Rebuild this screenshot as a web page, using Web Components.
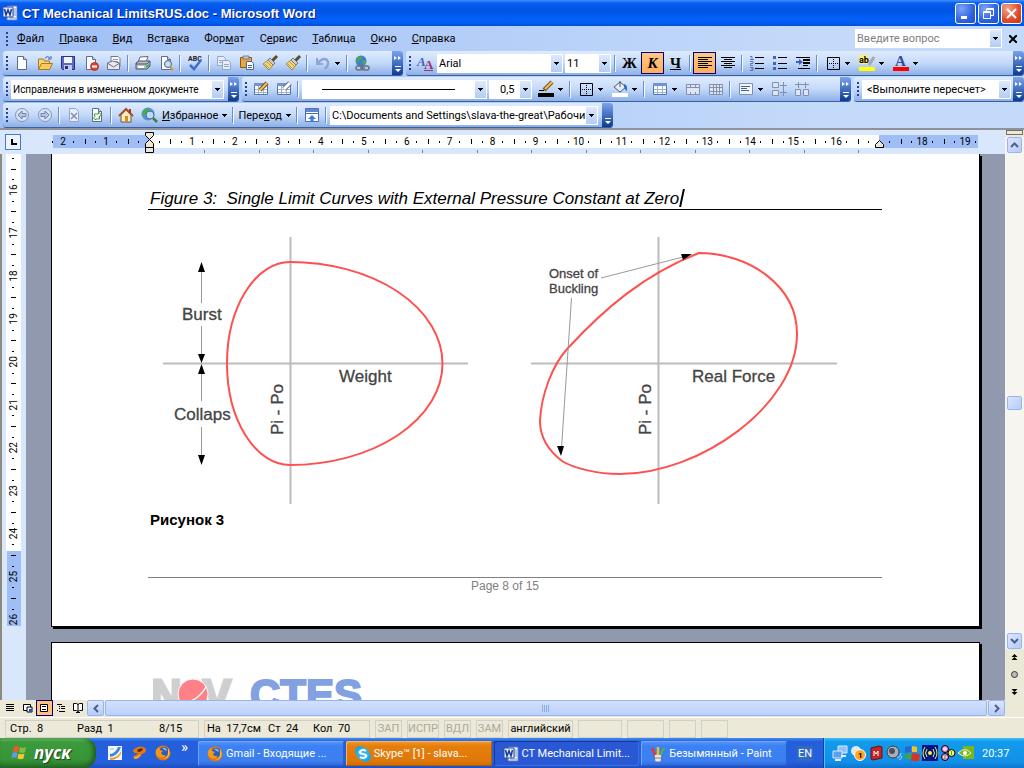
<!DOCTYPE html>
<html lang="ru">
<head>
<meta charset="utf-8">
<title>CT Mechanical LimitsRUS.doc - Microsoft Word</title>
<style>
  html, body { margin: 0; height: 100%; }
  body {
    font-family: Roboto, "Liberation Sans", sans-serif;
    font-size: 11px;
    color: #000;
    overflow: hidden;
  }
  word-window { height: 100%; }
</style>
</head>
<body>
<word-window></word-window>

<script>
const triangle = '<path d="M0 0h5v1h-1v1h-1v1h-1v-1h-1v-1h-1z"/>';
const wordIcon = '<path d="M5 1h10v14H5z" fill="#fff" stroke="#5a78b8"/><path d="M11 4h3M11 6h3M11 8h3M11 10h3M7 13h7" stroke="#6b8bd0"/><path d="M1 2h10v10H1z" fill="#e8effc" stroke="#2b4fa0"/><path d="M2.500 4l1.500 6 2-5 2 5 1.500-6" fill="none" stroke="#1d3f9a" stroke-width="1.600"/>';
const firefox = '<circle cx="8" cy="8" r="7.500" fill="#e8730c"/><circle cx="9" cy="7" r="5" fill="#2c5fb8"/><path d="M7 3q3-1 5 2-1 1-2 0z" fill="#9cc8f4"/><path d="M1 5l3-3 1 3 3 1-2 2q1 3 5 2-2 4-7 2-4-2-3-7z" fill="#f39a1b"/><path d="M13 3q3 5 0 9-2 2-5 2 5-2 5-6z" fill="#ffc53a"/>';
const sheet = '<path d="M3.500 1.500h6l3 3v10h-9z" fill="#fff" stroke="#5a6b94"/><path d="M9.500 1.500v3h3" fill="#cfdcf5" stroke="#5a6b94"/>';
const brush = '<path d="M15 1l-5 5" stroke="#5c4a2c" stroke-width="3"/><path d="M8 3l5 5-2 2-5-5z" fill="#c8ced8" stroke="#5b5f6b" stroke-width=".8"/><path d="M6 5l5 5-4 5-6-6z" fill="#f3d873" stroke="#87743a" stroke-width=".8"/><path d="M3 9l4 4M5 7l4 4" stroke="#b59a3c"/>';
const tableShape = '<path d="M1.500 2.500h13v11h-13z" fill="#fff" stroke="#5373b0"/><path d="M1 2h14v3H1z" fill="#6f93d4"/><path d="M2 8.500h12M2 11.500h12M5.500 5v8M10.500 5v8" stroke="#9db2da"/>';
const grayTable = '<path d="M1.500 3.500h13v10h-13z" fill="#dfe6f3" stroke="#8290ae"/>';
const frame = '<path d="M2.500 2.500h12v12h-12z" fill="none" stroke="#000"/><path d="M8.500 4v10M4 8.500h10" stroke="#000" stroke-dasharray="1 1"/>';

// Every glyph is drawn on a 16 x 16 grid
const ICONS = {
  word: wordIcon,
  firefox,
  newdoc: sheet,
  open: '<path d="M1.500 14V4h5l1 2h5v3" fill="#f7d570" stroke="#a57b22"/><path d="M1.500 14.500l3-6h11l-3 6z" fill="#fbc95c" stroke="#a57b22"/><path d="M8 3q3-3 5 0m1-2v3h-3" fill="none" stroke="#3a67b8"/>',
  save: '<path d="M1.500 1.500h13v13h-12l-1-1z" fill="#5b68c4" stroke="#26327e"/><path d="M4 2h8v6H4z" fill="#f1f4fc"/><path d="M4 10h8v5H4z" fill="#c3c9e0"/><path d="M5 11h3v3H5z" fill="#26327e"/>',
  permission: sheet + '<circle cx="11.500" cy="11.500" r="4" fill="#e2452c" stroke="#9d1d10" stroke-width=".7"/><path d="M9 11.500h5" stroke="#fff" stroke-width="2"/>',
  mail: '<path d="M5 1.500h7l2 2v8H5z" fill="#fff" stroke="#70778c"/><path d="M7 4.500h5M7 6.500h5" stroke="#8d9cc0"/><path d="M1.500 8l5-2 7 2v6.500h-12z" fill="#e8e8ee" stroke="#6d7284"/><path d="M2 8.500l5.500 3.500L13 8.500" fill="none" stroke="#6d7284"/>',
  print: '<path d="M5 2l8-.5-2 6H3z" fill="#fff" stroke="#667"/><path d="M1 8l3-2h11v5l-3 3H1z" fill="#b9bfcc" stroke="#4b5266"/><path d="M1 9h11l3-3" fill="none" stroke="#4b5266"/><path d="M3 11h6v2H3z" fill="#fff"/><path d="M11 12l3-2" stroke="#3fae3c" stroke-width="2"/>',
  preview: sheet + '<circle cx="10" cy="9" r="3.500" fill="#bfe0f7" stroke="#555d70"/><path d="M12 12l3 3" stroke="#d6963b" stroke-width="2"/>',
  spell: '<text x="1" y="6" font-size="7" font-weight="bold" fill="#222">ABC</text><path d="M3 10l4 4 7-9" fill="none" stroke="#3a6fd0" stroke-width="2.500"/>',
  copy: '<g fill="#e8edf8" stroke="#93a4c8"><path d="M1.500 1.500h6l2 2v7h-8z"/><path d="M6.500 5.500h6l2 2v7h-8z"/></g><path d="M8 9.500h5M8 11.500h5M3 5.500h3M3 7.500h3" stroke="#93a4c8"/>',
  paste: '<path d="M1.500 2.500h11v10h-11z" fill="#e9a93a" stroke="#8c5c15"/><path d="M4 1h6v3H4z" fill="#c5c8d1" stroke="#5c5f6c" stroke-width=".7"/><path d="M7.500 6.500h5l2 2v6h-7z" fill="#fff" stroke="#4963a0"/><path d="M9 10.500h4M9 12.500h4" stroke="#4963a0"/>',
  brush,
  undo: '<path d="M2 3v6h6" fill="none" stroke="#8fa5d3" stroke-width="2"/><path d="M3 8q5-6 9-3 3 4-2 9" fill="none" stroke="#8fa5d3" stroke-width="2.500"/>',
  link: '<circle cx="7" cy="6" r="5.500" fill="#3d7fd0"/><path d="M3 3q3-3 5-1 0 3-3 3-1 4-3 2zM8 6l4-1q0 4-3 5z" fill="#4cab45"/><g fill="none" stroke="#6b7180" stroke-width="1.500"><rect x="2" y="11" width="6" height="4" rx="2"/><rect x="8" y="11" width="7" height="4" rx="2"/><path d="M6 13h5"/></g>',
  styles: '<text x="0" y="11" font-family="Liberation Serif" font-style="italic" font-weight="bold" font-size="13" fill="#3d62bc">A</text><text x="7" y="14" font-family="Liberation Serif" font-weight="bold" font-size="13" fill="#a02f7c">A</text><path d="M7 15.500h9" stroke="#a02f7c"/>',
  left: '<path d="M1 2.500h14M1 4.500h10M1 6.500h14M1 8.500h10M1 10.500h14M1 12.500h10" stroke="#000"/>',
  center: '<path d="M1 2.500h14M4 4.500h8M1 6.500h14M4 8.500h8M1 10.500h14M4 12.500h8" stroke="#000"/>',
  numbers: '<path d="M6 2.500h9M6 8.500h9M6 13.500h9" stroke="#000"/><path d="M1 1.500h2v3M1 4.500h4M1 6.500h3v2H1.500v2H4M1 12.500h3v3H1M2 14h2" fill="none" stroke="#5a79ba"/>',
  bullets: '<path d="M6 2.500h9M6 8.500h9M6 13.500h9" stroke="#000"/><path d="M1 1h3v3H1zM1 7h3v3H1zM1 12h3v3H1z" fill="#4166b5"/>',
  indent: '<path d="M1 2.500h14M8 10.500h5M3 13.500h12" stroke="#000"/><path d="M8 5h7M8 8h7" stroke="#000" stroke-width="2"/><path d="M1 7h4" stroke="#2f62c4" stroke-width="2"/><path d="M4 4l4 3-4 3z" fill="#2f62c4"/>',
  frame,
  marker: '<path d="M0 0h9v9H0z" fill="#fbf36e"/><text x="0" y="8" font-size="9" font-weight="bold">ab</text><path d="M15 2l-5 8" stroke="#a7a7ae" stroke-width="3"/><path d="M0 12h16v4H0z" fill="#ff0"/>',
  color: '<text x="2" y="11" font-family="Liberation Serif" font-weight="bold" font-size="15" fill="#2f4f9c">A</text><path d="M0 12h16v4H0z" fill="#f00"/>',
  draw: tableShape + '<path d="M14 2L7 9" stroke="#7c5219" stroke-width="4"/><path d="M14 2L7 9" stroke="#f3c15c" stroke-width="2"/>',
  erase: tableShape + '<path d="M14 2L8 8" stroke="#68718a" stroke-width="5"/><path d="M14 2L8 8" stroke="#fff" stroke-width="3"/>',
  pen: '<path d="M14 1L6 9" stroke="#7c5219" stroke-width="4"/><path d="M14 1L7 8" stroke="#f3c15c" stroke-width="2"/><path d="M1 9.500h5" stroke="#000"/><path d="M0 12h16v4H0z"/>',
  bucket: '<path d="M2 6l6-5 6 5-6 5z" fill="#e6ebf5" stroke="#4c5874"/><path d="M8 6V0" stroke="#4c5874"/><path d="M12 3q4 1 3 7-2-1-3-4z" fill="#386bc8"/><path d="M0 12h16v4H0z" fill="#fff"/>',
  table: tableShape,
  merge: grayTable + '<path d="M2 6.500h12M5.500 3v3M10.500 3v3M5.500 11v3M10.500 11v3" stroke="#8290ae"/>',
  split: grayTable + '<path d="M2 6.500h12M2 10.500h12M5.500 4v9M8.500 4v9M11.500 4v9" stroke="#8290ae"/>',
  cellalign: '<path d="M1.500 2.500h13v11h-13z" fill="#eff3fa" stroke="#8290ae"/><path d="M3 5.500h9M3 7.500h6M3 9.500h8" stroke="#49618f"/>',
  rows: '<path d="M1.500 1.500h6v5h-6zM1.500 9.500h6v5h-6z" fill="#dfe6f3" stroke="#8290ae"/><path d="M12.500 1v14M9 4.500h7M9 11.500h7" stroke="#8290ae"/>',
  cols: '<path d="M1.500 8.500h5v6h-5zM9.500 8.500h5v6h-5z" fill="#dfe6f3" stroke="#8290ae"/><path d="M1 3.500h14M4.500 1v6M11.500 1v6" stroke="#8290ae"/>',
  back: '<circle cx="8" cy="8" r="6.500" fill="#d5e0f2" stroke="#8496ba"/><path d="M8 4L4 8l4 4v-2.500h4v-3H8z" fill="#b5c6e6" stroke="#6c81ac"/>',
  forward: '<circle cx="8" cy="8" r="6.500" fill="#d5e0f2" stroke="#8496ba"/><path d="M8 4l4 4-4 4v-2.500H4v-3h4z" fill="#b5c6e6" stroke="#6c81ac"/>',
  stop: '<path d="M3.500 1.500h6l3 3v10h-9z" fill="#e9eef8" stroke="#93a4c8"/><path d="M5 6l6 6M11 6l-6 6" stroke="#8090b2" stroke-width="1.500"/>',
  refresh: sheet + '<path d="M5.500 9V7h4V5l3 3-3 2M10.500 9v3h-4v1l-2-2 2-2" fill="none" stroke="#3b9a34"/>',
  home: '<path d="M3 8v7h10V8L8 3z" fill="#f7ebc4" stroke="#6b5a35"/><path d="M1 9l7-7 7 7" fill="none" stroke="#a6522b" stroke-width="2"/><path d="M11 2h2v4h-2z" fill="#9b3c24"/><path d="M7 9h3v6H7z" fill="#d98b1f"/>',
  search: '<circle cx="7" cy="7" r="6.500" fill="#4e95de"/><path d="M2 4q4-4 6-2 0 4-3 4-1 4-4 2z" fill="#4cab45"/><circle cx="9" cy="8" r="4" fill="#d6ecfa" fill-opacity=".8" stroke="#4d6b94"/><path d="M12 11l4 4" stroke="#3f7c45" stroke-width="2.500"/>',
  webbar: '<path d="M1.500 1.500h13v13h-13z" fill="#fff" stroke="#4a6fb8"/><path d="M2 2h12v3H2z" fill="#5d86d4"/><path d="M2 6.500h12" stroke="#4a6fb8"/><path d="M8 8l4 4H9.500v3h-3v-3H4z" fill="#3c7bd9"/>',
  normalview: '<path d="M4 4.500h8M4 6.500h8M4 8.500h8M4 10.500h8" stroke="#000"/>',
  webview: '<path d="M4.500 4.500h7v6h-7z" fill="#fff" stroke="#000"/><path d="M8 7h5v5H8z" fill="#fff" stroke="#000"/><path d="M10 9h3v3h-3z" fill="#2454c8"/>',
  printview: '<path d="M4.500 4.500h7v7h-7z" fill="#fff" stroke="#000"/><path d="M6 6.500h4M6 9.500h4" stroke="#000"/>',
  outline: '<path d="M4 4.500h5M6 6.500h1M8 6.500h4M6 8.500h1M8 8.500h4M4 10.500h1M6 11.500h6" stroke="#000"/>',
  reading: '<path d="M3.500 3.500h3l1.500 1 1.500-1h3v7h-3l-1.500 1-1.500-1h-3zM8 4v8M6 12.500h4" fill="#fff" stroke="#000"/>',
  flag: '<path d="M3 3q3-2 5-.5L7 8Q4 7 2 8z" fill="#f0592a"/><path d="M9 3q3 2 6 0l-1 5q-3 2-6 0z" fill="#7ac143"/><path d="M1.500 9q3-1.500 5 0l-1 5q-3-1.500-5 0z" fill="#5b9cf2"/><path d="M7.500 9.500q3 1.500 6 0l-1 5q-3 1.500-6 0z" fill="#fbc52d"/>',
  desktop: '<path d="M1 1h14v14H1z" fill="#f2f8ff"/><path d="M3 9q5 0 8-7h3q-3 9-11 10z" fill="#3a89dc"/><path d="M3 13q8 0 11-7v3q-4 6-11 6z" fill="#f39b22"/><path d="M3 4h4" stroke="#9db8da"/>',
  clasp: '<path d="M2 5q7-6 12-2 3 4-3 6-2 5-7 5-4-3 1-4l3-2q-6 1-6-3z" fill="#e8790f"/><path d="M6 5q4-3 6-1-1 3-5 3z" fill="#612a0a"/><path d="M3 13q3 1 6-3" fill="none" stroke="#ffd06a"/>',
  skype: '<circle cx="5" cy="5" r="5" fill="#1ba4e8"/><circle cx="11" cy="11" r="5" fill="#1ba4e8"/><circle cx="8" cy="8" r="6.500" fill="#2cb3f1"/><path d="M11 5Q8 3 5.500 5T8 8t2.500 3T5 11" fill="none" stroke="#fff" stroke-width="2"/>',
  paint: '<path d="M4 8h8l-1 8H5z" fill="#dfe8f5" stroke="#5772a8"/><path d="M5 9L2 2" stroke="#e23b2e" stroke-width="2.500"/><path d="M8 9V1" stroke="#f2b92b" stroke-width="2.500"/><path d="M10 9l4-7" stroke="#51b04a" stroke-width="2.500"/><path d="M5 12h6" stroke="#c66"/>',
  network: '<path d="M6 1h9v7H6z" fill="#8fc1f7" stroke="#dce9fb"/><path d="M1 6h9v7H1z" fill="#5a9ff0" stroke="#dce9fb"/><path d="M3 15h6M9 11h5" stroke="#e4ecf8" stroke-width="2"/>',
  badge: '<circle cx="6" cy="6" r="5" fill="#dfe8f0"/><circle cx="10" cy="10" r="5.500" fill="#ffa51f" stroke="#fff"/><text x="8" y="13" font-size="8" font-weight="bold">1</text>',
  mbook: '<path d="M3 3l8-2 3 1v11l-9 2-2-1z" fill="#c22427" stroke="#6e0d10"/><path d="M6 11V6l2 3 2-3v5" fill="none" stroke="#fff"/>',
  speaker: '<circle cx="7" cy="7" r="6" fill="#a9aeb8" stroke="#3d424c"/><circle cx="6" cy="6" r="3" fill="#4b505b"/><path d="M11 13q4-1 4-5M13 15q3-1 3-4" fill="none" stroke="#b7d4ff"/>',
  blocks: '<path d="M1 2l6-1v6l-6 1z" fill="#2c62d2"/><path d="M8 1l5 1v5H8z" fill="#f3c321"/><path d="M1 9l6-1v6H1z" fill="#3aa640"/><path d="M8 8l8 1-1 7H7z" fill="#d83126"/>',
  antenna: '<path d="M0 0h16v16H0z" fill="#001489"/><circle cx="8" cy="8" r="2" fill="#ffef3b"/><path d="M5 4q-3 4 0 8M11 4q3 4 0 8M3 2q-4 6 0 12M13 2q4 6 0 12" fill="none" stroke="#ffef3b"/>',
  balls: '<g stroke="#000"><circle cx="5" cy="4" r="3.500" fill="#fb8ae0"/><circle cx="11.500" cy="8" r="3.500" fill="#f3f05f"/><circle cx="5" cy="12" r="3.500" fill="#fb8ae0"/></g><path d="M3 4h4M5 2v4M10 8h3M3 12h4" stroke="#fff"/><path d="M5 10v4M11.500 6v4" stroke="#36ad3a"/>',
  nvidia: '<path d="M5 1h11v13H5z" fill="#7bb71b"/><path d="M0 8q7-7 13 0-6 6-13 0z" fill="#7bb71b" stroke="#e8f5cf"/><circle cx="7" cy="8" r="2" fill="#fff"/>'
};

class WordIcon extends HTMLElement {
  connectedCallback() {
    this.attachShadow({ mode: 'open' });
    this.shadowRoot.innerHTML = `
      <style>
        :host { display: block; width: 16px; height: 16px; flex: none; }
        svg { display: block; width: 100%; height: 100%; overflow: visible; }
      </style>
      <svg viewBox="0 0 16 16" aria-hidden="true">${ICONS[this.getAttribute('name')] || ''}</svg>
    `;
  }
}
customElements.define('word-icon', WordIcon);

class ToolButton extends HTMLElement {
  connectedCallback() {
    const icon = this.getAttribute('icon');
    this.attachShadow({ mode: 'open' });
    this.shadowRoot.innerHTML = `
      <style>
        :host { display: block; flex: none; }
        button {
          display: flex;
          align-items: center;
          justify-content: center;
          gap: 4px;
          width: 23px;
          height: 22px;
          padding: 0;
          border: 1px solid transparent;
          background: none;
          font: inherit;
          color: inherit;
        }
        :host([menu]) button { width: 34px; }
        :host([text]) button { width: auto; padding: 0 2px 0 1px; }
        :host([active]) button { border-color: #000080; background: linear-gradient(#ffc884, #ffae5a); }
        :host([glyph]) button { font: bold 15px "Liberation Serif", serif; }
        .caret { width: 5px; height: 3px; flex: none; }
      </style>
      <button aria-label="${this.getAttribute('label') || icon || ''}">
        ${icon ? `<word-icon name="${icon}"></word-icon>` : ''}<span><slot></slot></span>
        ${this.hasAttribute('menu') ? `<svg class="caret" viewBox="0 0 5 3">${triangle}</svg>` : ''}
      </button>
    `;
    if (!this.textContent) this.shadowRoot.querySelector('span').remove();
    if (this.hasAttribute('text') || this.hasAttribute('glyph')) {
      this.shadowRoot.querySelector('button').removeAttribute('aria-label');
    }
  }
}
customElements.define('tool-button', ToolButton);

class ToolSep extends HTMLElement {
  connectedCallback() {
    this.attachShadow({ mode: 'open' });
    this.shadowRoot.innerHTML = `
      <style>
        :host { display: block; flex: none; width: 1px; height: 16px; margin: 0 3px 0 2px; background: #6a8ccb; box-shadow: 1px 1px #f1f9ff; }
      </style>
    `;
  }
}
customElements.define('tool-sep', ToolSep);

class ToolCombo extends HTMLElement {
  connectedCallback() {
    const value = this.getAttribute('value');
    this.attachShadow({ mode: 'open' });
    this.shadowRoot.innerHTML = `
      <style>
        :host { display: grid; flex: none; height: 19px; margin: 0 1px; background: #fff; }
        select, input {
          grid-area: 1 / 1;
          box-sizing: border-box;
          width: 100%;
          min-width: 0;
          height: 19px;
          padding: 0 12px 0 var(--indent, 1px);
          border: 1px solid #fff;
          appearance: none;
          background: none;
          font: inherit;
          color: inherit;
          outline: none;
        }
        input::placeholder { color: #808080; opacity: 1; }
        .drop {
          grid-area: 1 / 1;
          justify-self: end;
          display: grid;
          place-items: center;
          width: 11px;
          height: 17px;
          margin: 1px;
          background: linear-gradient(#dde9fd, #b3cdf3);
          pointer-events: none;
        }
        .drop svg { width: 5px; height: 3px; }
        .stroke { grid-area: 1 / 1; align-self: center; height: 1px; margin: 0 32px 0 20px; background: #000; }
      </style>
      ${this.hasAttribute('placeholder')
        ? `<input placeholder="${this.getAttribute('placeholder')}" aria-label="Вопрос">`
        : `<select aria-label="${this.getAttribute('label') || ''}"><option>${value || ''}</option></select>`}
      ${this.hasAttribute('stroke') ? '<span class="stroke"></span>' : ''}
      <span class="drop"><svg viewBox="0 0 5 3">${triangle}</svg></span>
    `;
  }
}
customElements.define('tool-combo', ToolCombo);

class ToolBar extends HTMLElement {
  connectedCallback() {
    this.attachShadow({ mode: 'open' });
    this.shadowRoot.innerHTML = `
      <style>
        :host {
          display: flex;
          flex: none;
          align-items: center;
          box-sizing: border-box;
          height: 25px;
          padding-left: 3px;
          border-bottom: 1px solid #3b619c;
          border-radius: 3px;
          background: linear-gradient(#dfebfe, #c4daf9 50%, #8db0e8);
        }
        :host([fill]) { flex: 1; min-width: 0; }
        .grip {
          width: 2px;
          height: 14px;
          flex: none;
          margin-right: 2px;
          background: repeating-linear-gradient(#27418a 0 2px, transparent 2px 4px);
        }
        .more {
          align-self: stretch;
          display: flex;
          flex-direction: column;
          align-items: center;
          justify-content: space-between;
          box-sizing: border-box;
          width: 11px;
          height: 24px;
          margin: 0 0 0 auto;
          padding: 5px 0 3px;
          border: 0;
          border-radius: 0 3px 3px 0;
          background: linear-gradient(#7aa3ee, #4470c0 50%, #0b3a92);
        }
        .more svg { width: 8px; height: 6px; }
        .tail { flex: none; width: var(--tail, 3px); }
      </style>
      <span class="grip"></span>
      <slot></slot>
      <span class="tail"></span>
      <button class="more" aria-label="Параметры панелей">
        <svg viewBox="0 0 8 6">${this.hasAttribute('more') ? '<path d="M0 0l3 2-3 2zM4 0l3 2-3 2z" fill="#fff"/>' : ''}</svg>
        <svg viewBox="0 0 8 6"><path d="M1 0h6v1H1zM1 3h6L4 6z" fill="#fff"/></svg>
      </button>
    `;
  }
}
customElements.define('tool-bar', ToolBar);

class TitleBar extends HTMLElement {
  connectedCallback() {
    this.attachShadow({ mode: 'open' });
    this.shadowRoot.innerHTML = `
      <style>
        :host {
          display: flex;
          flex: none;
          align-items: center;
          gap: 2px;
          box-sizing: border-box;
          height: 26px;
          padding: 0 2px;
          background: linear-gradient(#3a94ff, #0a5cf0 12%, #0054e3 40%, #0062fb 80%, #0050d8);
          color: #fff;
        }
        h1 { flex: 1; margin: 0 0 0 2px; font: bold 13px "Liberation Sans", sans-serif; text-shadow: 1px 1px #0a1883; white-space: nowrap; }
        button {
          display: grid;
          place-items: center;
          box-sizing: border-box;
          width: 21px;
          height: 21px;
          padding: 0;
          border: 1px solid #fff;
          border-radius: 3px;
          background: radial-gradient(circle at 30% 25%, #7ba4f5, #2e62e0 60%, #1f4fd0);
        }
        .close { background: radial-gradient(circle at 30% 25%, #f0a68d, #e0492a 60%, #c53510); }
        svg { width: 13px; height: 13px; fill: none; stroke: #fff; }
      </style>
      <word-icon name="word"></word-icon>
      <h1><slot></slot></h1>
      <button aria-label="Свернуть"><svg viewBox="0 0 13 13"><path d="M2 10.500h6" stroke-width="3"/></svg></button>
      <button aria-label="Свернуть в окно"><svg viewBox="0 0 13 13"><path d="M4.500 4V1.500h7v7H9M4 2.500h8M1.500 4.500h7v7h-7zM1 5.500h8"/></svg></button>
      <button class="close" aria-label="Закрыть"><svg viewBox="0 0 13 13"><path d="M2 2l9 9M11 2l-9 9" stroke-width="2"/></svg></button>
    `;
  }
}
customElements.define('title-bar', TitleBar);

class MenuBar extends HTMLElement {
  connectedCallback() {
    const items = ['<u>Ф</u>айл', '<u>П</u>равка', '<u>В</u>ид', 'Вст<u>а</u>вка', 'Фор<u>м</u>ат', 'С<u>е</u>рвис', '<u>Т</u>аблица', '<u>О</u>кно', '<u>С</u>правка'];
    this.attachShadow({ mode: 'open' });
    this.shadowRoot.innerHTML = `
      <style>
        :host { display: flex; align-items: center; height: 25px; padding: 0 6px; }
        .grip { width: 2px; height: 14px; margin-right: 2px; background: repeating-linear-gradient(#27418a 0 2px, transparent 2px 4px); }
        nav { display: flex; flex: 1; gap: 1px; }
        button { padding: 2px 7px; border: 0; background: none; font: inherit; color: inherit; }
        tool-combo { width: 147px; }
        .x { padding: 0 1px 0 6px; height: 16px; }
        .x svg { display: block; width: 8px; height: 8px; }
      </style>
      <span class="grip"></span>
      <nav>${items.map(item => `<button>${item}</button>`).join('')}</nav>
      <tool-combo placeholder="Введите вопрос"></tool-combo>
      <button class="x" aria-label="Закрыть документ"><svg viewBox="0 0 8 8"><path d="M0 0l8 8M8 0L0 8" stroke="#000" stroke-width="2"/></svg></button>
    `;
  }
}
customElements.define('menu-bar', MenuBar);

class CommandBars extends HTMLElement {
  connectedCallback() {
    this.attachShadow({ mode: 'open' });
    this.shadowRoot.innerHTML = `
      <style>
        :host { display: grid; gap: 1px; flex: none; }
        .row { display: flex; gap: 3px; padding-left: 3px; }
        .review { width: 213px; font-size: 10px; }
        .font { width: 126px; }
        .size { width: 46px; }
        .line { width: 185px; }
        .weight { width: 43px; --indent: 10px; }
        .calc { flex: 1; min-width: 0; --indent: 4px; }
        .address { width: 268px; }
      </style>
      <div class="row">
        <tool-bar more style="--tail: 19px">
          <tool-button icon="newdoc"></tool-button><tool-button icon="open"></tool-button><tool-button icon="save"></tool-button><tool-button icon="permission"></tool-button><tool-button icon="mail"></tool-button>
          <tool-sep></tool-sep>
          <tool-button icon="print"></tool-button><tool-button icon="preview"></tool-button>
          <tool-sep></tool-sep>
          <tool-button icon="spell"></tool-button>
          <tool-sep></tool-sep>
          <tool-button icon="copy"></tool-button><tool-button icon="paste"></tool-button><tool-button icon="brush"></tool-button><tool-button icon="brush"></tool-button>
          <tool-sep></tool-sep>
          <tool-button icon="undo" menu></tool-button>
          <tool-sep></tool-sep>
          <tool-button icon="link"></tool-button>
        </tool-bar>
        <tool-bar more fill>
          <tool-button icon="styles"></tool-button>
          <tool-combo class="font" value="Arial" label="Шрифт"></tool-combo>
          <tool-combo class="size" value="11" label="Размер"></tool-combo>
          <tool-sep></tool-sep>
          <tool-button glyph>Ж</tool-button><tool-button glyph active><i>К</i></tool-button><tool-button glyph><u>Ч</u></tool-button>
          <tool-sep></tool-sep>
          <tool-button icon="left" active></tool-button><tool-button icon="center"></tool-button>
          <tool-sep></tool-sep>
          <tool-button icon="numbers"></tool-button><tool-button icon="bullets"></tool-button><tool-button icon="indent"></tool-button>
          <tool-sep></tool-sep>
          <tool-button icon="frame" menu></tool-button><tool-button icon="marker" menu></tool-button><tool-button icon="color" menu></tool-button>
        </tool-bar>
      </div>
      <div class="row">
        <tool-bar more>
          <tool-combo class="review" value="Исправления в измененном документе" label="Просмотр"></tool-combo>
        </tool-bar>
        <tool-bar more style="--tail: 27px">
          <tool-button icon="draw"></tool-button><tool-button icon="erase"></tool-button>
          <tool-sep></tool-sep>
          <tool-combo class="line" stroke label="Тип линии"></tool-combo>
          <tool-combo class="weight" value="0,5" label="Толщина"></tool-combo>
          <tool-button icon="pen" menu></tool-button>
          <tool-sep></tool-sep>
          <tool-button icon="frame" menu></tool-button><tool-button icon="bucket" menu></tool-button>
          <tool-sep></tool-sep>
          <tool-button icon="table" menu></tool-button><tool-button icon="merge"></tool-button><tool-button icon="split"></tool-button>
          <tool-sep></tool-sep>
          <tool-button icon="cellalign" menu></tool-button><tool-button icon="rows"></tool-button><tool-button icon="cols"></tool-button>
        </tool-bar>
        <tool-bar more fill style="--tail: 1px">
          <tool-combo class="calc" value="&lt;Выполните пересчет&gt;" label="Пересчет"></tool-combo>
        </tool-bar>
      </div>
      <div class="row">
        <tool-bar>
          <tool-button icon="back"></tool-button><tool-button icon="forward"></tool-button>
          <tool-sep></tool-sep>
          <tool-button icon="stop"></tool-button><tool-button icon="refresh"></tool-button>
          <tool-sep></tool-sep>
          <tool-button icon="home"></tool-button><tool-button icon="search"></tool-button>
          <tool-button text menu><u>И</u>збранное</tool-button>
          <tool-sep></tool-sep>
          <tool-button text menu>Пере<u>х</u>од</tool-button>
          <tool-sep></tool-sep>
          <tool-button icon="webbar"></tool-button>
          <tool-sep></tool-sep>
          <tool-combo class="address" value="C:\\Documents and Settings\\slava-the-great\\Рабочи" label="Адрес"></tool-combo>
        </tool-bar>
      </div>
    `;
  }
}
customElements.define('command-bars', CommandBars);

// Length of one centimetre on both rulers
const CM = 42.95;

class PageRuler extends HTMLElement {
  connectedCallback() {
    const mark = (x, y, h) => `<rect x="${Math.round(x)}" y="${y}" width="1" height="${h}"/>`;
    let marks = '';
    for (let n = -2; n < 20; n++) {
      const x = 136 + n * CM;
      if (n !== 0 && n !== 17) marks += `<text x="${x}" y="10">${Math.abs(n)}</text>`;
      marks += mark(x - CM / 4, 6, 2);
      if (n < 19) marks += mark(x + CM / 2, 4, 5);
      marks += mark(x + CM / 4 - 1, 6, 2);
    }
    let tabs = '';
    for (let i = 0; i < 13; i++) tabs += mark(191 + i * 54.5, 15, 3);
    this.attachShadow({ mode: 'open' });
    this.shadowRoot.innerHTML = `
      <style>
        :host { display: flex; flex: none; height: 24px; padding-left: 5px; background: #d8e7fc; }
        .tab { flex: none; width: 16px; height: 16px; box-sizing: border-box; margin: 4px 0 0; padding: 0; border: 1px solid #4a78cf; background: #eef4ff; }
        .tab svg { display: block; width: 14px; height: 14px; }
        .scale { display: block; flex: none; width: 984px; height: 24px; margin-left: -8px; }
        text { font-size: 10px; text-anchor: middle; }
      </style>
      <button class="tab" aria-label="Табуляция"><svg viewBox="0 0 14 14"><path d="M6 4v5h5" fill="none" stroke="#000" stroke-width="2"/></svg></button>
      <svg class="scale" viewBox="0 -5 984 24">
        <path d="M40 0h96v13H40zM866 0h99v13h-99z" fill="#9ebef5"/>
        <path d="M136 0h730v13H136z" fill="#fff"/>
        ${marks}
        <g fill="#808080">${tabs}</g>
        <path d="M132.500-2.500h8v3l-4 4-4-4zM132.500 12.500v-4l4-4 4 4v4zM132.500 12.500h8v5h-8zM862.500 12.500v-3l4-4 4 4v3z" fill="#ece9d8" stroke="#000"/>
      </svg>
    `;
  }
}
customElements.define('page-ruler', PageRuler);

class SideRuler extends HTMLElement {
  connectedCallback() {
    const mark = (x, y, w) => `<rect x="${x}" y="${Math.round(y)}" width="${w}" height="1"/>`;
    let marks = '';
    for (let n = 15; n <= 26; n++) {
      const y = 36 + (n - 16) * CM;
      if (n > 15) marks += `<text transform="translate(15 ${y}) rotate(-90)">${n}</text>` + mark(10, y - CM / 4, 2);
      if (n < 26) marks += mark(9, y + CM / 2, 5) + mark(10, y + CM / 4, 2);
    }
    this.attachShadow({ mode: 'open' });
    this.shadowRoot.innerHTML = `
      <style>
        :host { display: block; flex: none; width: 24px; overflow: hidden; border-left: 2px solid #8d8a7c; background: #d8e7fc; }
        svg { display: block; width: 24px; height: 546px; }
        text { font-size: 10px; text-anchor: middle; }
      </style>
      <svg viewBox="0 0 24 546">
        <path d="M4 0h15v397H4z" fill="#fff"/>
        <path d="M5 397h14v75H5z" fill="#9ebef5"/>
        ${marks}
      </svg>
    `;
  }
}
customElements.define('side-ruler', SideRuler);

class LimitFigure extends HTMLElement {
  connectedCallback() {
    this.attachShadow({ mode: 'open' });
    this.shadowRoot.innerHTML = `
      <style>
        :host { display: block; }
        svg { display: block; width: 692px; max-width: 100%; font: 17px "Liberation Sans", sans-serif; }
        text { fill: #444; stroke: #444; stroke-width: .3; }
        .small { font-size: 13px; }
        .axis { stroke: #bcbcbc; stroke-width: 2; }
        .lead { stroke: #999; stroke-width: 1; }
        .curve { fill: none; stroke: #ff5050; stroke-width: 2; }
      </style>
      <svg viewBox="148 219 692 292" role="img" aria-label="Single limit curves">
        <path class="axis" d="M290.500 237v267M163 363.500h305M658.500 237v267M531 363.500h306"/>
        <path class="curve" d="M290 262A152.500 101.500 0 0 1 290 465A63 101.500 0 0 1 290 262z"/>
        <path class="curve" d="M699 253C748 253 797 285 797 334C797 405 700 474 620 474C597 474 573 468 562 461C549 451 540 437 540 421C541 396 552 365 568 348C605 308 645 274 699 253z"/>
        <path class="lead" d="M201.500 270v33M201.500 326v30M201.500 372v29M201.500 427v30M601 278l82-21M571.500 298l-10 150"/>
        <path d="M201.500 262l3.500 10h-7zM201.500 363l3.500-9h-7zM201.500 364l3.500 10h-7zM201.500 465l3.500-10h-7zM692 254l-9 6-2-6zM561 456l3-10h-7z"/>
        <text x="182" y="320">Burst</text>
        <text x="174" y="420">Collaps</text>
        <text x="339" y="382">Weight</text>
        <text x="692" y="382">Real Force</text>
        <text transform="translate(283 435) rotate(-90)">Pi - Po</text>
        <text transform="translate(651 435) rotate(-90)">Pi - Po</text>
        <text class="small" x="549" y="278">Onset of</text>
        <text class="small" x="549" y="293">Buckling</text>
      </svg>
    `;
  }
}
customElements.define('limit-figure', LimitFigure);

class DocPage extends HTMLElement {
  connectedCallback() {
    this.attachShadow({ mode: 'open' });
    this.shadowRoot.innerHTML = `
      <style>
        :host {
          display: block;
          box-sizing: border-box;
          padding: 0 97px 0 96px;
          border: 1px solid #000;
          background: #fff;
          box-shadow: 2px 2px #000;
        }
      </style>
      <slot></slot>
    `;
  }
}
customElements.define('doc-page', DocPage);

class ScrollRail extends HTMLElement {
  connectedCallback() {
    this.attachShadow({ mode: 'open' });
    this.shadowRoot.innerHTML = `
      <style>
        :host { display: flex; flex-direction: column; align-items: center; flex: none; width: 19px; background: #ece9d8; }
        .splitter { box-sizing: border-box; width: 17px; height: 5px; margin-bottom: 2px; border: 1px solid #716f64; background: #ece9d8; }
        .rail { display: flex; flex-direction: column; align-items: center; flex: 1; width: 100%; background: #f6f5f0; }
        .top { flex: 244; }
        .bottom { flex: 223; }
        button {
          display: grid;
          place-items: center;
          box-sizing: border-box;
          width: 15px;
          height: 16px;
          flex: none;
          padding: 0;
          border: 1px solid #98b4ee;
          border-radius: 2px;
          background: linear-gradient(135deg, #dbe6ff, #b6cbfa);
        }
        .rail svg { width: 9px; height: 6px; fill: none; stroke: #4d6185; stroke-width: 2; }
        .thumb { height: 14px; }
        .jump { width: 17px; height: 17px; border: 0; background: none; }
        .jump svg { width: 9px; height: 9px; }
      </style>
      <span class="splitter"></span>
      <div class="rail">
        <button aria-label="Вверх"><svg viewBox="0 0 9 6"><path d="M1 5l3.500-3.500L8 5"/></svg></button>
        <span class="top"></span>
        <button class="thumb" aria-label="Положение"></button>
        <span class="bottom"></span>
        <button aria-label="Вниз"><svg viewBox="0 0 9 6"><path d="M1 1l3.500 3.500L8 1"/></svg></button>
      </div>
      <button class="jump" aria-label="Предыдущая страница"><svg viewBox="0 0 9 9"><path d="M4.500 1l3 3h-6zM4.500 4l3 3h-6z"/></svg></button>
      <button class="jump" aria-label="Объект"><svg viewBox="0 0 9 9"><circle cx="4.500" cy="4.500" r="3" fill="#bbb" stroke="#333"/></svg></button>
      <button class="jump" aria-label="Следующая страница"><svg viewBox="0 0 9 9"><path d="M4.500 5l3-3h-6zM4.500 8l3-3h-6z"/></svg></button>
    `;
  }
}
customElements.define('scroll-rail', ScrollRail);

class DocArea extends HTMLElement {
  connectedCallback() {
    this.attachShadow({ mode: 'open' });
    this.shadowRoot.innerHTML = `
      <style>
        :host { display: flex; flex: 1; min-height: 0; }
        .editor { display: flex; flex-direction: column; flex: 1; min-width: 0; overflow: hidden; }
        .view { display: flex; flex: 1; min-height: 0; }
        main {
          flex: 1;
          display: flex;
          flex-direction: column;
          gap: 15px;
          min-width: 0;
          overflow: hidden;
          padding: 0 25px;
          background: #9099ae;
          font-family: "Liberation Sans", Arial, sans-serif;
        }
        doc-page { flex: none; }
        .first { border-top: 0; }
        h2 { margin: 0 0 9px; padding: 35px 0 0 2px; border-bottom: 1px solid #000; font: italic 17px/20px "Liberation Sans", Arial, sans-serif; white-space: nowrap; }
        .cursor { display: inline-block; width: 2px; height: 18px; margin-left: 2px; vertical-align: -3px; background: #000; transform: skewX(-12deg); }
        .caption { margin: 0 0 48px; padding-left: 2px; font: bold 15px/18px "Liberation Sans", Arial, sans-serif; }
        footer { margin-bottom: 31px; padding-right: 20px; border-top: 1px solid #808080; color: #808080; font-size: 12px; line-height: 17px; text-align: center; }
        .logo { display: block; width: 214px; height: 90px; margin: 30px 0 0 5px; font: bold 42px "Liberation Sans", sans-serif; }
      </style>
      <div class="editor">
        <page-ruler></page-ruler>
        <div class="view">
          <side-ruler></side-ruler>
          <main>
            <doc-page class="first">
              <h2>Figure 3:&nbsp; Single Limit Curves with External Pressure Constant at Zero<span class="cursor"></span></h2>
              <limit-figure></limit-figure>
              <p class="caption">Рисунок 3</p>
              <footer>Page 8 of 15</footer>
            </doc-page>
            <doc-page>
              <svg class="logo" viewBox="0 0 214 90" role="img" aria-label="NOV CTES">
                <text x="-2" y="36" fill="#cfcfcf" stroke="#cfcfcf" stroke-width="3">N</text>
                <text x="50" y="36" fill="#cfcfcf" stroke="#cfcfcf" stroke-width="3">V</text>
                <circle cx="40" cy="21" r="15" fill="#ff8087" stroke="#fff"/>
                <path d="M30 30q15-2 23-16" fill="none" stroke="#fff" stroke-width="1.500"/>
                <text x="97" y="36" fill="#81a1e0" stroke="#81a1e0" stroke-width="2">CTES</text>
              </svg>
            </doc-page>
          </main>
        </div>
      </div>
      <scroll-rail></scroll-rail>
    `;
  }
}
customElements.define('doc-area', DocArea);

class ViewBar extends HTMLElement {
  connectedCallback() {
    const views = ['normalview', 'webview', 'printview', 'outline', 'reading'];
    this.attachShadow({ mode: 'open' });
    this.shadowRoot.innerHTML = `
      <style>
        :host { display: flex; flex: none; box-sizing: border-box; height: 18px; padding: 0 19px 1px 2px; background: #ece9d8; border-bottom: 1px solid #fff; }
        button { box-sizing: border-box; width: 17px; height: 16px; padding: 0; border: 1px solid transparent; background: none; }
        button word-icon { margin: -1px 0 0 -1px; }
        .on { border-color: #000080; background: #ffc078; }
        .arrow { border: 1px solid #98b4ee; border-radius: 2px; background: linear-gradient(#dbe6ff, #b6cbfa); display: grid; place-items: center; }
        .arrow svg { width: 6px; height: 9px; fill: none; stroke: #4d6185; stroke-width: 2; }
        .thumb {
          flex: 1;
          display: grid;
          place-items: center;
          margin: 0 1px;
          border: 1px solid #98b4ee;
          border-radius: 2px;
          background: linear-gradient(#d2e0ff, #bcd0fb);
        }
        .thumb svg { width: 8px; height: 7px; }
      </style>
      ${views.map(v => `<button class="${v === 'printview' ? 'on' : ''}" aria-label="${v}"><word-icon name="${v}"></word-icon></button>`).join('')}
      <button class="arrow" aria-label="Влево"><svg viewBox="0 0 6 9"><path d="M5 1L1.500 4.500 5 8"/></svg></button>
      <button class="thumb" aria-label="Положение"><svg viewBox="0 0 8 7"><path d="M.5 0v7M2.500 0v7M4.500 0v7M6.500 0v7" stroke="#8caee8"/></svg></button>
      <button class="arrow" aria-label="Вправо"><svg viewBox="0 0 6 9"><path d="M1 1l3.500 3.500L1 8"/></svg></button>
    `;
  }
}
customElements.define('view-bar', ViewBar);

class StatusBar extends HTMLElement {
  connectedCallback() {
    this.attachShadow({ mode: 'open' });
    this.shadowRoot.innerHTML = `
      <style>
        :host { display: flex; flex: none; gap: 5px; box-sizing: border-box; height: 20px; padding: 2px 5px 0; background: #ece9d8; }
        div { box-sizing: border-box; flex: none; height: 18px; border: 1px solid #d0d0ca; line-height: 16px; text-align: center; white-space: nowrap; }
        .where { display: grid; grid-template-columns: 67px 82px auto; width: 194px; padding-left: 4px; text-align: left; }
        .spot { display: grid; grid-template-columns: 61px 45px auto; width: 166px; padding-left: 2px; text-align: left; }
        .off { width: 27px; color: #aca899; }
        .wide { width: 32px; }
        .lang { width: 65px; }
        .e1 { width: 44px; }
        .e2 { width: 37px; }
        .e3 { width: 27px; }
      </style>
      <div class="where"><span>Стр.&nbsp; 8</span><span>Разд&nbsp; 1</span><span>8/15</span></div>
      <div class="spot"><span>На&nbsp; 17,7см</span><span>Ст&nbsp; 24</span><span>Кол&nbsp; 70</span></div>
      <div class="off">ЗАП</div>
      <div class="off wide">ИСПР</div>
      <div class="off">ВДЛ</div>
      <div class="off">ЗАМ</div>
      <div class="lang">английский</div>
      <div class="e1"></div><div class="e2"></div><div class="e3"></div><div class="e3"></div>
    `;
  }
}
customElements.define('status-bar', StatusBar);

class TaskButton extends HTMLElement {
  connectedCallback() {
    this.attachShadow({ mode: 'open' });
    this.shadowRoot.innerHTML = `
      <style>
        :host { display: block; flex: 1; min-width: 0; }
        button {
          display: flex;
          align-items: center;
          gap: 3px;
          width: 100%;
          height: 25px;
          padding: 0 9px;
          border: 0;
          border-radius: 2px;
          background: linear-gradient(#5b96f8, #3c81f3 20%, #3b7ff0 80%, #2f66d6);
          box-shadow: inset 1px 1px #6fa4fa, inset -1px -1px #2a5fce;
          color: #fff;
          font: inherit;
          white-space: nowrap;
        }
        :host([alert]) button { background: linear-gradient(#f59b2c, #e67e0c 20%, #e07808 80%, #c96a05); box-shadow: inset 1px 1px #f8b25c, inset -1px -1px #b45c00; }
        :host([active]) button { background: #2a58d4; box-shadow: inset 1px 1px #17388e, inset -1px -1px #3b6fe6; }
      </style>
      <button><word-icon name="${this.getAttribute('icon')}"></word-icon><slot></slot></button>
    `;
  }
}
customElements.define('task-button', TaskButton);

class TaskBar extends HTMLElement {
  connectedCallback() {
    const tray = ['network', 'badge', 'mbook', 'speaker', 'blocks', 'antenna', 'balls', 'nvidia'];
    this.attachShadow({ mode: 'open' });
    this.shadowRoot.innerHTML = `
      <style>
        :host { display: flex; flex: none; height: 30px; background: linear-gradient(#3f8cf3, #245edb 12%, #2560de 80%, #1d4fc0); color: #fff; }
        .start {
          display: flex;
          align-items: center;
          gap: 7px;
          width: 96px;
          padding: 0 0 2px 11px;
          border: 0;
          border-radius: 0 12px 12px 0;
          background: linear-gradient(#6fbf6a, #3c9a3c 15%, #379637 70%, #27762a);
          box-shadow: inset -3px -1px 5px #1d5c20;
          color: #fff;
          font: italic bold 17px "Open Sans", sans-serif;
          text-shadow: 1px 1px 1px #1c3f1c;
        }
        .quick { display: flex; align-items: center; gap: 8px; width: 91px; padding-left: 11px; box-sizing: border-box; }
        .quick a { display: block; }
        .quick span { align-self: flex-start; margin-top: 2px; font-size: 15px; margin-left: 2px; line-height: 14px; }
        .tasks { display: flex; flex: 1; gap: 2px; padding: 3px 0 0 11px; min-width: 0; }
        .lang { display: grid; place-items: center; width: 36px; }
        .lang span { padding: 1px; background: #316ac5; }
        .tray { display: flex; align-items: center; gap: 2px; padding: 0 13px 0 8px; border-left: 1px solid #0c3ea8; background: linear-gradient(#3fc0f8, #119bec 12%, #1290e8 80%, #0e74cc); box-shadow: inset 1px 0 #4fc4fa; }
        time { width: 29px; margin-left: 6px; }
      </style>
      <button class="start"><word-icon name="flag"></word-icon>пуск</button>
      <div class="quick">
        <a href="#" aria-label="Рабочий стол"><word-icon name="desktop"></word-icon></a>
        <a href="#" aria-label="Почта"><word-icon name="clasp"></word-icon></a>
        <a href="#" aria-label="Firefox"><word-icon name="firefox"></word-icon></a>
        <span>»</span>
      </div>
      <div class="tasks">
        <task-button icon="firefox">Gmail - Входящие ...</task-button>
        <task-button icon="skype" alert>Skype™ [1] - slava...</task-button>
        <task-button icon="word" active>CT Mechanical Limit...</task-button>
        <task-button icon="paint">Безымянный - Paint</task-button>
      </div>
      <div class="lang"><span>EN</span></div>
      <div class="tray">${tray.map(t => `<word-icon name="${t}"></word-icon>`).join('')}<time>20:37</time></div>
    `;
  }
}
customElements.define('task-bar', TaskBar);

class WordWindow extends HTMLElement {
  connectedCallback() {
    this.attachShadow({ mode: 'open' });
    this.shadowRoot.innerHTML = `
      <style>
        :host { display: flex; flex-direction: column; overflow: hidden; }
        header { flex: none; border-bottom: 2px solid #8f9298; background: linear-gradient(90deg, #9ebef5, #c4dafa 80%); }
      </style>
      <title-bar>CT Mechanical LimitsRUS.doc - Microsoft Word</title-bar>
      <header>
        <menu-bar></menu-bar>
        <command-bars></command-bars>
      </header>
      <doc-area></doc-area>
      <view-bar></view-bar>
      <status-bar></status-bar>
      <task-bar></task-bar>
    `;
  }
}
customElements.define('word-window', WordWindow);
</script>
</body>
</html>
